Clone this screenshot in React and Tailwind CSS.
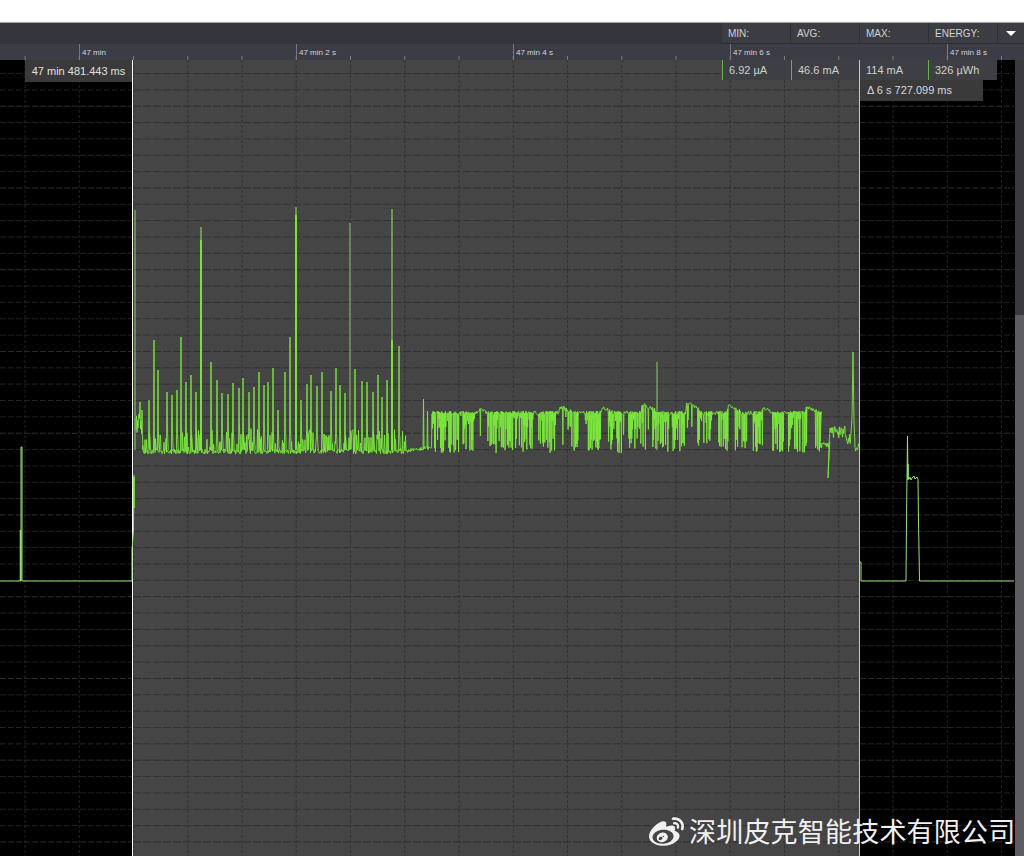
import { useMemo } from "react";
import { SiSinaweibo } from "react-icons/si";

const GREEN = "#7ce83c";
const PALE = "#9be07a";
const BASE_Y = 454;

// [x, top y] of the tall spikes in the first half of the trace
const spikes = [
  [142, 410], [149, 400], [153.5, 340], [158, 370], [167, 392], [172, 395], [177, 390],
  [181, 337], [186, 382], [191, 375], [196, 392], [211, 362], [217, 380], [222, 393],
  [228, 394], [233, 383], [239, 388], [243, 378], [249, 392], [254, 387], [259, 372],
  [264, 385], [268, 382], [273, 368], [278, 410], [285, 372], [290, 337], [301, 400],
  [307, 384], [311, 375], [317, 386], [322, 372], [331, 391], [336, 368], [340, 385],
  [345, 393], [355, 369], [362, 381], [367, 382], [373, 392], [378, 375], [382, 397],
  [387, 380], [399, 346], [406, 408],
];

const thickSpikes = [
  [201, 227, 240],
  [296, 207, 215],
  [392, 209, 340],
];

const thinSpikes = [
  [135, 210],
  [350, 223],
  [657, 362],
];

// dense dip groups on the plateau, start and end x
const dipGroups = [
  [432, 475], [487, 533], [538, 555], [565, 577], [585, 600], [608, 622], [628, 645],
  [652, 668], [672, 688], [697, 712], [717, 728], [735, 747], [753, 763], [772, 783],
  [788, 807], [815, 820],
];

const arches = [
  [481, 407], [562, 405], [604, 406], [645, 403], [689, 401], [730, 404], [765, 406], [808, 405],
];

function makeRandom(seed) {
  let s = seed;
  return () => {
    s = (s * 16807) % 2147483647;
    return s / 2147483647;
  };
}

function plateauTop(x) {
  let y = 411;
  arches.forEach(([ax, ay]) => {
    if (x >= ax - 3 && x < ax + 10) {
      y = Math.min(y, ay + Math.abs(x - ax) * 0.55);
    }
  });
  return y;
}

function buildTrace() {
  const rand = makeRandom(20240);
  const pts = [];
  const spikeMap = new Map(spikes.map(([x, y]) => [Math.round(x), y]));

  // busy part with spikes on top of a noisy baseline
  pts.push([136, 430]);
  for (let x = 136; x < 406; x += 0.5) {
    const top = spikeMap.get(Math.round(x));
    if (top && Number.isInteger(x)) {
      // spikes sit on a small shoulder
      pts.push([x - 0.4, 425 + rand() * 14], [x, top], [x + 0.4, 420 + rand() * 16], [x + 0.8, 436 + rand() * 10], [x + 1.2, 450]);
    } else {
      const bump = rand() < 0.3 ? 22 * rand() : 0;
      const tall = x < 142 ? 18 + 16 * rand() : 0;
      pts.push([x, BASE_Y - 5 * rand() - bump - tall]);
    }
  }

  // calm part before the plateau
  for (let x = 406; x < 432; x += 0.5) {
    const lift = (x - 406) * 0.25;
    pts.push([x, 453 - lift * 0.6 - 4 * rand()]);
    if (x === 423) pts.push([x + 0.5, 399], [x + 1, 448]);
    if (x === 427) pts.push([x + 0.5, 411], [x + 1, 450]);
  }

  // plateau with dense drops
  for (let x = 432; x < 822; x += 0.75) {
    const inGroup = dipGroups.some(([a, b]) => x >= a && x <= b);
    const top = plateauTop(x) + rand() * 4;
    pts.push([x, top]);
    if (inGroup) {
      const r = rand();
      if (r < 0.5) {
        pts.push([x + 0.35, 438 + rand() * 15], [x + 0.7, plateauTop(x) + rand() * 5]);
      } else if (r < 0.75) {
        pts.push([x + 0.35, 416 + rand() * 14], [x + 0.7, plateauTop(x) + rand() * 5]);
      }
    } else if (rand() < 0.05) {
      pts.push([x + 0.35, 425 + rand() * 20]);
    }
  }

  // tail of the selection
  for (let x = 820; x < 830; x += 0.75) pts.push([x, 442 + rand() * 7]);
  pts.push([828, 478], [829, 446], [830, 428]);
  for (let x = 831; x < 851; x += 0.6) pts.push([x, 426 + rand() * 12 + (x > 846 ? 8 : 0)]);
  pts.push([852, 418], [853, 352], [854, 420], [855, 447]);
  for (let x = 855; x < 859; x += 0.6) pts.push([x, 443 + rand() * 9]);

  return pts.map((p) => `${p[0].toFixed(2)},${(p[1] - 60).toFixed(1)}`).join(" ");
}

function Chart() {
  const trace = useMemo(buildTrace, []);
  const vLines = Array.from({ length: 19 }, (_, i) => 25 + i * 54.25);
  const hLines = Array.from({ length: 49 }, (_, i) => 13.5 + i * 16.35);

  return (
    <svg className="absolute inset-0 w-[1015px] h-[796px]" viewBox="0 0 1015 796">
      {/* grid */}
      {hLines.map((y, i) => (
        <g key={y}>
          <line x1="0" x2="132" y1={y} y2={y} stroke={i % 5 === 2 ? "#2c2c2c" : "#222222"} strokeDasharray="6 2" />
          <line x1="133" x2="859" y1={y} y2={y} stroke={i % 5 === 2 ? "#2e2e2e" : "#333333"} strokeDasharray="8 2" />
          <line x1="860" x2="1014" y1={y} y2={y} stroke={i % 5 === 2 ? "#2c2c2c" : "#222222"} strokeDasharray="6 2" />
        </g>
      ))}
      {vLines.map((x) => (
        <line
          key={x}
          x1={x}
          x2={x}
          y1="0"
          y2="796"
          stroke={x > 133 && x < 859 ? "#333333" : "#222222"}
          strokeDasharray="3 2"
        />
      ))}

      {/* trace, left of the selection */}
      <polyline points="0,521 21,521 21,387 22,387 22,521 132,521 132,490 133.5,470 134,415" fill="none" stroke={PALE} strokeWidth="1" />
      <line x1="20.5" x2="20.5" y1="470" y2="521" stroke={PALE} strokeWidth="1.5" />
      <line x1="133.8" x2="133.8" y1="417" y2="448" stroke={GREEN} strokeWidth="2" />

      {/* trace, inside the selection */}
      <polyline points={trace} fill="none" stroke={GREEN} strokeWidth="0.9" strokeLinejoin="round" />
      {thinSpikes.map(([x, top]) => (
        <line key={x} x1={x} x2={x} y1={top - 60} y2="390" stroke="#8fce6a" strokeWidth="1" />
      ))}
      {thickSpikes.map(([x, top, solid]) => (
        <g key={x}>
          <line x1={x} x2={x} y1={top - 60} y2="390" stroke="#9be66e" strokeWidth="1" />
          <line x1={x} x2={x} y1={solid - 60} y2="390" stroke={GREEN} strokeWidth="1.8" />
        </g>
      ))}

      {/* trace, right of the selection */}
      <polyline
        points="860,502 861,502 861,521 906,521 906.5,460 907.5,376 908,418 909,419 910,417 911,420 912,418 914,416 915,419 917,417 918,419 918.5,461 919.5,521 1014,521"
        fill="none"
        stroke={PALE}
        strokeWidth="1"
      />
      <line x1="908" x2="908" y1="404" y2="420" stroke={PALE} strokeWidth="1.5" />
    </svg>
  );
}

function HeaderCell({ label }) {
  return (
    <div className="w-[69px] pl-[6px] border-r border-[#2f3034] h-full flex items-center">
      {label}
    </div>
  );
}

function Tick({ label }) {
  return (
    <div className="w-[217px] shrink-0 h-full flex">
      <div className="w-px h-full bg-[#77787d]" />
      <span className="pl-[2px] pt-[3px] text-[8px] leading-[12px] text-[#d6d6d6]">{label}</span>
    </div>
  );
}

function StatCell({ value, w, bar = "bg-[#6fae4e]" }) {
  return (
    <div className={`${w} h-full flex items-center`}>
      <div className={`w-px h-full ${bar}`} />
      <span className="pl-[6px]">{value}</span>
    </div>
  );
}

export default function App() {
  const minorTicks = Array.from({ length: 19 }, (_, i) => 25 + i * 54.25);

  return (
    <div className="w-[1024px] h-[856px] overflow-hidden flex flex-col bg-white font-['Liberation_Sans',sans-serif]">
      <div className="h-[22px] shrink-0 bg-white border-b border-[#f2f4f3]" />
      <div className="h-px shrink-0 bg-[#a8a8a8]" />

      {/* header with the measurement labels */}
      <div className="h-[21px] shrink-0 bg-[#35363b] flex justify-end text-[10px] text-[#d2d2d2]">
        <div className="w-[302px] bg-[#3c3d42] flex items-center border-b border-[#2e2f33]">
          <HeaderCell label="MIN:" />
          <HeaderCell label="AVG:" />
          <HeaderCell label="MAX:" />
          <HeaderCell label="ENERGY:" />
          <div className="flex-1 flex justify-center">
            <div className="w-0 h-0 border-x-[5px] border-x-transparent border-t-[5px] border-t-white" />
          </div>
        </div>
      </div>

      {/* time ruler */}
      <div className="relative h-[16px] shrink-0 bg-[#3b3c46] flex pl-[79px]">
        <Tick label="47 min" />
        <Tick label="47 min 2 s" />
        <Tick label="47 min 4 s" />
        <Tick label="47 min 6 s" />
        <Tick label="47 min 8 s" />
        <svg className="absolute left-0 bottom-0 w-[1015px] h-[4px]" viewBox="0 0 1015 4">
          {minorTicks.map((x) => (
            <line key={x} x1={x} x2={x} y1="0" y2="4" stroke="#7b7c82" />
          ))}
        </svg>
      </div>

      {/* chart */}
      <div className="relative flex-1 flex bg-black">
        <div className="w-[132px] bg-black border-r border-white box-content" />
        <div className="w-[726px] bg-[#454545] border-r border-[#c8c8c8] box-content" />
        <div className="flex-1 bg-black" />
        <div className="w-[9px] flex flex-col">
          <div className="h-[255px] bg-[#3a3a3e]" />
          <div className="flex-1 bg-[#5d5d61]" />
        </div>

        <Chart />

        <div className="absolute left-[25px] top-0 w-[107px] h-[22px] bg-[#3a3a3a] flex items-center justify-center text-[11px] text-[#e0e0e0]">
          47 min 481.443 ms
        </div>

        <div className="absolute left-[722px] top-0 w-[275px] h-[20px] bg-[#3e3f43] flex text-[11px] text-[#d0d0d0]">
          <StatCell value="6.92 µA" w="w-[69px]" />
          <StatCell value="46.6 mA" w="w-[68px]" />
          <StatCell value="114 mA" w="w-[69px]" bar="bg-[#c8c8c8]" />
          <StatCell value="326 µWh" w="w-[69px]" />
        </div>
        <div className="absolute left-[860px] top-[20px] w-[123px] h-[21px] bg-[#3a3a3a] flex items-center pl-[7px] text-[11px] text-[#d8d8d8]">
          Δ 6 s 727.099 ms
        </div>

        {/* watermark */}
        <div className="absolute left-[647px] top-[753px] flex items-center gap-[3px] text-[#f0f0f0]">
          <SiSinaweibo className="w-[39px] h-[35px]" />
          <span className="text-[27px] leading-[36px] tracking-[0.2px] font-['Noto_Sans_CJK_SC',sans-serif]">深圳皮克智能技术有限公司</span>
        </div>
      </div>
    </div>
  );
}
